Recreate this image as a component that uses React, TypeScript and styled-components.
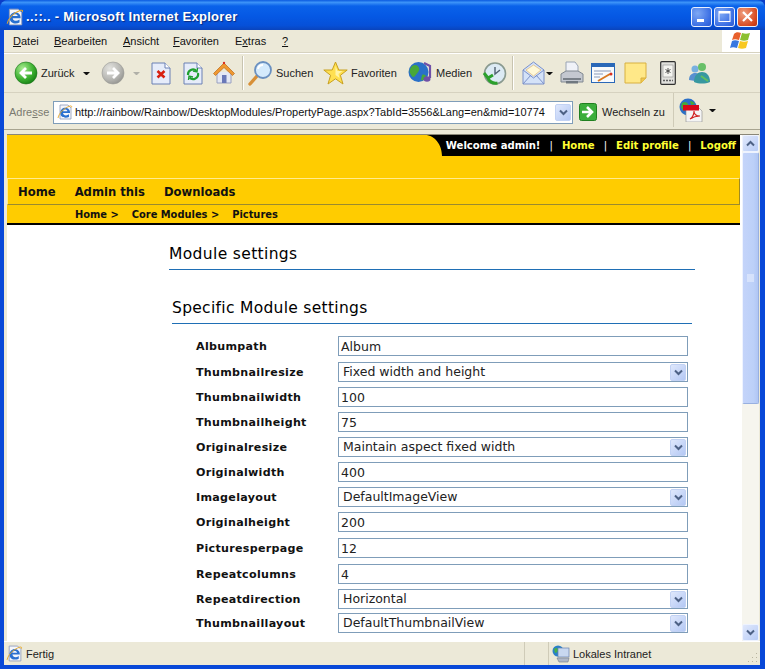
import React from "react";
import styled, { createGlobalStyle } from "styled-components";

const Global = createGlobalStyle`
  html, body { margin: 0; padding: 0; background: #0a3dc8; overflow: hidden; }
  * { box-sizing: border-box; }
`;
const ui = `"Liberation Sans", "Noto Sans", sans-serif`;
const page = `"DejaVu Sans", sans-serif`;

const Win = styled.div`
  width: 765px; height: 669px; display: flex; flex-direction: column;
  background: #0848d8; border-radius: 8px 8px 0 0; overflow: hidden;
`;
const TitleBar = styled.div`
  height: 30px; flex: none; display: flex; align-items: center; padding: 3px 7px 0 6px;
  background: linear-gradient(180deg, #0a5ae0 0%, #3c93f8 8%, #0a62ea 20%, #0558e4 55%, #0650d8 85%, #0a44bc 100%);
`;
const TitleText = styled.div`
  flex: 1; color: #fff; font: bold 13px "Liberation Sans", sans-serif; letter-spacing: .3px;
  text-shadow: 1px 1px 1px #0a2a80; white-space: pre; padding-left: 2px;
`;
const WinBtn = styled.div<{ $red?: boolean }>`
  width: 21px; height: 20px; margin-left: 2px; border: 1px solid #e8f0ff; border-radius: 3px; display: flex; align-items: center; justify-content: center;
  background: ${p => p.$red ? "radial-gradient(circle at 30% 30%, #f0a080, #d84a20 70%, #b83010)" : "radial-gradient(circle at 30% 30%, #7ea8f4, #3a6ee4 70%, #2a58d0)"};
`;
const Frame = styled.div`
  flex: 1; min-height: 0; margin: 0 5px 4px 4px; background: #ece9d8; display: flex; flex-direction: column;
`;
const MenuRow = styled.div`
  height: 23px; flex: none; display: flex; border-bottom: 1px solid #d6d2c0; font: 11px ${ui}; color: #111;
`;
const MenuItems = styled.div`
  flex: 1; display: flex; align-items: center; padding-left: 9px;
`;
const MenuLabel = styled.span<{ $w: number }>`
  width: ${p => p.$w}px; flex: none;
  u { text-underline-offset: 1px; }
`;
const FlagBox = styled.div`
  width: 38px; background: #fff; display: flex; align-items: center; justify-content: center;
`;
const ToolRow = styled.div`
  height: 40px; flex: none; display: flex; align-items: center; padding-left: 10px; border-bottom: 1px solid #d6d2c0; border-top: 1px solid #fff;
  font: 11px ${ui}; color: #222;
`;
const Tool = styled.div<{ $w: number }>`
  width: ${p => p.$w}px; flex: none; display: flex; align-items: center; gap: 3px; white-space: nowrap;
`;
const Sep = styled.div`
  height: 34px; background: #c8c4b0; border-right: 1px solid #fff; flex: none; width: 2px;
`;
const Caret = styled.div<{ $grey?: boolean; $ml?: number }>`
  height: 0; border: 3px solid transparent; border-top: 3px solid ${p => p.$grey ? "#b0b0a8" : "#111"}; border-bottom: 0; margin-left: ${p => p.$ml ?? 0}px; flex: none; width: 7px;
  border-left-width: 3.5px; border-right-width: 3.5px;
`;
const AddrRow = styled.div`
  height: 37px; flex: none; display: flex; align-items: center; padding: 2px 0 0 5px; font: 11px ${ui}; color: #222;
  border-bottom: 1px solid #a8a490;
`;
const AddrLabel = styled.span`
  color: #7a7a70; width: 44px; flex: none;
`;
const AddrBox = styled.div`
  width: 520px; height: 23px; flex: none; background: #fff; border: 1px solid #7f9db9; display: flex; align-items: center; padding: 0 1px 0 3px; gap: 2px; color: #111;
`;
const AddrUrl = styled.span`
  flex: 1; white-space: nowrap; overflow: hidden;
`;
const DropBtn = styled.div`
  width: 16px; height: 17px; flex: none; border: 1px solid #c2d2f4; border-radius: 2px; background: linear-gradient(135deg, #dfe8fc, #b4c8f4); display: flex; align-items: center; justify-content: center;
`;
const GoWrap = styled.div`
  display: flex; align-items: center; gap: 5px; margin-left: 6px; width: 94px; flex: none; color: #222; white-space: nowrap;
`;
const PdfWrap = styled.div`
  display: flex; align-items: center; gap: 6px; height: 100%; border-left: 1px solid #cfcbb8; padding-left: 5px; margin-top: -4px;
`;
const ViewPort = styled.div`
  flex: 1; min-height: 0; display: flex; margin: 4px 1px 0 3px; background: #fff; border-top: 1px solid #8a8778;
`;
const PageBox = styled.div`
  flex: 1; min-width: 0; overflow: hidden; background: #fff; margin-right: 2px;
`;
const TopBand = styled.div`
  height: 43px; background: #ffcc00; display: flex; justify-content: flex-end; align-items: flex-start;
`;
const UserBar = styled.div`
  width: 315px; height: 21px; background: #000; display: flex; align-items: center; justify-content: flex-end; gap: 9px; padding: 0 4px 0 0;
  font: bold 10.1px ${page}; color: #fff; white-space: nowrap; clip-path: path("M0 0 C10 0 17 10 17 21 L315 21 L315 0 Z");
`;
const UserLink = styled.span`color: #ffff33;`;
const Divider = styled.span`font-weight: normal; color: #fff;`;
const NavBar = styled.div`
  height: 27px; background: #ffcc00; border-top: 1px solid #ffeb90; border-bottom: 1px solid #9a8a30; border-left: 1px solid #ffeb90; border-right: 1px solid #a08a20;
  display: flex; align-items: center; gap: 19px; padding-left: 10px; font: bold 11.6px ${page}; color: #111;
`;
const Crumbs = styled.div`
  height: 20px; background: #ffcc00; border-bottom: 2px solid #000; display: flex; align-items: center; padding-left: 68px; font: bold 9.9px ${page}; color: #111; white-space: pre;
`;
const CrumbGap = styled.span<{ $w: number }>`margin-right: ${p => p.$w}px;`;
const Main = styled.div`
  padding: 20px 45px 0 162px;
`;
const H1 = styled.h1`
  margin: 0; font: normal 15.5px/18px ${page}; letter-spacing: .36px; color: #000; border-bottom: 1px solid #1f6fb5; height: 25px;
`;
const Section = styled.div`
  margin: 29px 3px 0 3px;
`;
const H2 = styled.h2`
  margin: 0; font: normal 15.5px/18px ${page}; letter-spacing: .3px; color: #000; height: 25px; border-bottom: 1px solid #1f6fb5;
`;
const Rows = styled.div`
  margin-top: 12px; padding-left: 24px;
`;
const Row = styled.div<{ $h: number }>`
  height: ${p => p.$h}px; display: flex; align-items: flex-start;
`;
const Label = styled.div`
  width: 142px; flex: none; font: bold 11.1px/21px ${page}; color: #111; letter-spacing: .3px;
`;
const TextField = styled.input`
  width: 350px; height: 20px; border: 1px solid #7f9db9; background: #fff; padding: 0 2px; font: 12.5px ${page}; color: #222; outline: none; display: block;
`;
const SelectField = styled.div`
  width: 350px; height: 20px; border: 1px solid #7f9db9; background: #fff; padding: 0 1px 0 4px; font: 12.5px/18px ${page}; color: #222; display: flex; align-items: center; justify-content: space-between;
`;
const Scroll = styled.div`
  width: 17px; flex: none; background: #f6f5ee; display: flex; flex-direction: column;
`;
const ScrollBtn = styled.div`
  height: 17px; flex: none; border: 1px solid #eef3ff; border-radius: 2px; background: linear-gradient(135deg, #e0e8fc, #b8ccf6); display: flex; align-items: center; justify-content: center;
`;
const Thumb = styled.div`
  height: 252px; flex: none; border: 1px solid #eef3ff; border-radius: 2px; border-right-color: #98b0e0; border-bottom-color: #98b0e0; background: linear-gradient(90deg, #c4d4fa, #bcd0f8 70%, #b0c6f4);
  display: flex; align-items: center; justify-content: center;
`;
const Track = styled.div`flex: 1;`;
const Status = styled.div`
  height: 24px; flex: none; display: flex; align-items: center; font: 11px ${ui}; color: #222; border-top: 1px solid #fff; background: #ece9d8;
`;
const StatusMain = styled.div`
  width: 520px; display: flex; align-items: center; gap: 3px; padding-left: 2px; flex: none; height: 100%;
`;
const Pane = styled.div<{ $w: number }>`
  width: ${p => p.$w}px; height: 100%; border-left: 1px solid #cfcbb8; flex: none; display: flex; align-items: center; gap: 3px; padding-left: 3px;
`;
const Grip = styled.div`
  flex: 1; display: flex; justify-content: flex-end; align-items: flex-end; height: 100%; padding: 0 2px 2px 0;
`;

const Chevron = ({ c = "#4d6185" }: { c?: string }) => (
  <svg width="9" height="7" viewBox="0 0 9 7"><path d="M1 1.5 L4.5 5 L8 1.5" fill="none" stroke={c} strokeWidth="2" /></svg>
);

const IeIcon = ({ s = 16 }: { s?: number }) => (
  <svg width={s} height={s} viewBox="0 0 16 16">
    <path d="M3 1h8l3 3v11H3z" fill="#f4f6fc" stroke="#8e9ab8" strokeWidth=".8" />
    <path d="M13 9H6c.3 2.6 3.6 3.2 6 1.3v2.6c-3.6 1.8-8.5.6-8.7-3.6C3 4.6 8 2.5 11 4.6c1.6 1.1 2.1 2.6 2 4.4zM10.4 7.2C10.2 5 6.4 5 6 7.2z" fill="#2a70d0" />
    <path d="M1 14c1-5 6-10 12-12 1.500-.3 2 .3 1.500 1.500" fill="none" stroke="#e8a828" strokeWidth=".9" />
  </svg>
);

const RoundArrow = ({ grey }: { grey?: boolean }) => (
  <svg width="24" height="24" viewBox="0 0 24 24">
    <defs>
      <radialGradient id={grey ? "gg" : "gr"} cx=".35" cy=".3" r=".8">
        <stop offset="0" stopColor={grey ? "#e4e4e0" : "#a8ec90"} />
        <stop offset=".6" stopColor={grey ? "#b8b8b4" : "#3cb030"} />
        <stop offset="1" stopColor={grey ? "#8e8e8a" : "#107810"} />
      </radialGradient>
    </defs>
    <circle cx="12" cy="12" r="11" fill={`url(#${grey ? "gg" : "gr"})`} stroke={grey ? "#9a9a96" : "#187018"} strokeWidth=".6" />
    {grey
      ? <path d="M6 12h10M12 7l5 5-5 5" fill="none" stroke="#fff" strokeWidth="2.8" />
      : <path d="M18 12H8M12 7l-5 5 5 5" fill="none" stroke="#fff" strokeWidth="2.8" />}
  </svg>
);

const PageIcon = ({ kind }: { kind: "stop" | "ref" }) => (
  <svg width="20" height="23" viewBox="0 0 20 23">
    <path d="M1 1h13l5 5v16H1z" fill="#e6ecfa" stroke="#6a80b4" />
    <path d="M14 1v5h5" fill="#fff" stroke="#6a80b4" />
    {kind === "stop"
      ? <path d="M6.500 9l7 6.500M13.500 9l-7 6.500" stroke="#d82010" strokeWidth="2.600" />
      : <g fill="none" stroke="#20a030" strokeWidth="2.200"><path d="M5 13a5 5 0 0 1 8.500-4" /><path d="M15 11a5 5 0 0 1-8.500 4.500" /><path d="M14.500 6l-.5 4-4-1" strokeWidth="1.400" /><path d="M5.500 18l.5-4 4 1" strokeWidth="1.400" /></g>}
  </svg>
);

const Home = () => (
  <svg width="24" height="24" viewBox="0 0 24 24">
    <path d="M5 11v11h14V11" fill="#e4e8f4" stroke="#98a0c0" />
    <path d="M12 2L1.500 12.500l2 2L12 6.500l8.500 8 2-2z" fill="#f09830" stroke="#b86818" strokeWidth=".7" />
    <rect x="10" y="14" width="4.500" height="8" fill="#6a78b8" />
    <circle cx="12" cy="2" r="1.200" fill="#d83020" />
  </svg>
);

const Magnifier = () => (
  <svg width="25" height="27" viewBox="0 0 25 27">
    <path d="M9 16L2 24" stroke="#d89038" strokeWidth="3.400" strokeLinecap="round" />
    <circle cx="15" cy="10" r="8" fill="#d4eafc" stroke="#6a90c0" strokeWidth="1.800" />
    <path d="M10 9a5 5 0 0 1 5-4" stroke="#fff" strokeWidth="2" fill="none" />
  </svg>
);

const Star = () => (
  <svg width="25" height="25" viewBox="0 0 25 25">
    <path d="M12.500 1l3.300 8h8.400l-6.800 5.300 2.600 8.700-7.500-5.200L5 23l2.600-8.700L.8 9h8.400z" fill="#ffe050" stroke="#c8a020" strokeWidth="1" />
    <path d="M12.500 5l2 5h5l-4 3 1 4-4-3z" fill="#fff4a8" />
  </svg>
);

const Media = () => (
  <svg width="25" height="24" viewBox="0 0 25 24">
    <circle cx="10.500" cy="11" r="10" fill="#2a70c8" />
    <path d="M4 5c3-2 6-1 7 2s-2 5-4 8-4-1-5-3 0-5 2-7zM14 14c2-1 4 0 4 2s-3 4-5 3z" fill="#48a838" />
    <path d="M16 2l6 3v12" fill="none" stroke="#7050a8" strokeWidth="2.200" />
    <ellipse cx="19" cy="18" rx="3.500" ry="2.800" fill="#7050a8" />
  </svg>
);

const History = () => (
  <svg width="25" height="25" viewBox="0 0 25 25">
    <circle cx="13" cy="12.500" r="10.500" fill="#dceaf4" stroke="#8a9a90" strokeWidth="1.600" />
    <path d="M13 6v7l5 -4" fill="none" stroke="#506070" strokeWidth="1.400" />
    <path d="M2 12l4 5 5-3M5.500 16c1 4 5 7 10 6" fill="none" stroke="#2ca02c" strokeWidth="3" />
  </svg>
);

const Mail = () => (
  <svg width="23" height="24" viewBox="0 0 23 24">
    <path d="M1 9L11.500 1 22 9v14H1z" fill="#d4e2f8" stroke="#7a90c8" />
    <path d="M4 9l7.500-5L19 9l-7.500 6z" fill="#fff8d8" stroke="#e0b060" strokeWidth=".6" />
    <path d="M1 23l8-9M22 23l-8-9M1 9l10.500 8L22 9" fill="none" stroke="#7a90c8" />
  </svg>
);

const Printer = () => (
  <svg width="24" height="24" viewBox="0 0 24 24">
    <path d="M6 1h9l3 4v8H6z" fill="#f0f2f8" stroke="#9aa4b4" />
    <path d="M1 13l5-3h12l5 3v8H1z" fill="#c4c8d0" stroke="#808890" />
    <path d="M3 18h18" stroke="#606870" strokeWidth="1.600" />
    <rect x="6" y="20" width="12" height="2.500" fill="#707880" />
  </svg>
);

const EditIcon = () => (
  <svg width="24" height="20" viewBox="0 0 24 20">
    <rect x=".5" y=".5" width="23" height="19" fill="#f8fafc" stroke="#2a68b8" />
    <rect x=".5" y=".5" width="23" height="3.500" fill="#2a68b8" />
    <path d="M3 8h17M3 11h9M3 14h6" stroke="#8a9ab8" />
    <path d="M7 18l12-7" stroke="#d87820" strokeWidth="2" />
    <circle cx="20" cy="11" r="1.500" fill="#d83020" />
  </svg>
);

const Note = () => (
  <svg width="23" height="22" viewBox="0 0 23 22">
    <path d="M1 1h21v15l-5 5H1z" fill="#ffe888" stroke="#d8b040" />
    <path d="M17 21v-5h5" fill="#f0c850" stroke="#d8b040" />
  </svg>
);

const Pda = () => (
  <svg width="16" height="24" viewBox="0 0 16 24">
    <rect x=".7" y=".7" width="14.600" height="22.600" rx="1" fill="#e0e0dc" stroke="#303030" strokeWidth="1.200" />
    <rect x="3" y="4" width="10" height="12" fill="#f4f4f0" stroke="#909090" strokeWidth=".6" />
    <path d="M8 7v6M5.500 8.500l5 3M10.500 8.500l-5 3" stroke="#404040" strokeWidth=".9" />
    <path d="M3 19.500h10" stroke="#606060" strokeWidth="1.600" strokeDasharray="2 1" />
  </svg>
);

const Messenger = () => (
  <svg width="26" height="22" viewBox="0 0 26 22">
    <circle cx="8" cy="7" r="3.500" fill="#78b0e0" />
    <path d="M2 18c0-5 3-7 6-7s5 2 5 5l-5 3z" fill="#5890d0" />
    <circle cx="15" cy="5" r="4" fill="#68c068" />
    <path d="M7 20c0-7 4-10 8-10s8 3 8 10c-5 2-11 2-16 0z" fill="#3898a0" />
    <path d="M14 14l7 5" stroke="#60c060" strokeWidth="2" />
  </svg>
);

const GoArrow = () => (
  <svg width="18" height="18" viewBox="0 0 18 18">
    <rect x=".5" y=".5" width="17" height="17" rx="2" fill="#3cae3c" stroke="#208020" />
    <path d="M3 9h9M8 4l5 5-5 5" fill="none" stroke="#fff" strokeWidth="2.600" />
  </svg>
);

const PdfGlobe = () => (
  <svg width="24" height="24" viewBox="0 0 24 24">
    <circle cx="9" cy="9" r="8.500" fill="#2a70c8" />
    <path d="M3 5c3-2 5-1 6 1s-2 4-3 6-3-1-4-3zM11 3c2 0 4 1 5 3l-4 1z" fill="#48a838" />
    <path d="M7 8h11l5 5v11H7z" fill="#f4f4f4" stroke="#8a8a8a" strokeWidth=".6" />
    <rect x="4" y="7" width="16" height="5.500" fill="#d80818" />
    <path d="M11 21c3-2 4-5 4-8 0 3 2 5 6 5-3 0-7 1-10 3z" fill="none" stroke="#d02020" strokeWidth="1.100" />
  </svg>
);

const Flag = () => (
  <svg width="22" height="20" viewBox="0 0 22 20">
    <path d="M4 3c2-2 4-2 7-1L9 9C6 8 4 8 2 9z" fill="#e8602c" />
    <path d="M12 2c3 1 5 1 8 0l-2 7c-3 1-5 1-8 0z" fill="#8cc030" />
    <path d="M2 10c2-1 4-1 7 0l-2 7c-3-1-5-1-7 0z" fill="#3878e0" />
    <path d="M10 10c3 1 5 1 8 0l-2 7c-3 1-5 1-8 0z" fill="#f8c820" />
  </svg>
);

const NetIcon = () => (
  <svg width="18" height="18" viewBox="0 0 18 18">
    <circle cx="6" cy="6" r="5.500" fill="#2a80c8" />
    <path d="M2 4c2-2 4-1 4 1s-2 3-3 3zM7 7c2 0 3 1 2 3z" fill="#48b048" />
    <rect x="6" y="3" width="11" height="9" fill="#c8d8f0" stroke="#6880b0" strokeWidth=".7" />
    <path d="M5 13h12l-1 4H7z" fill="#b0b8c8" stroke="#707888" strokeWidth=".6" />
  </svg>
);

const WMin = () => <svg width="13" height="13" viewBox="0 0 13 13"><rect x="2" y="9" width="7" height="3" fill="#fff" /></svg>;
const WMax = () => <svg width="13" height="13" viewBox="0 0 13 13"><rect x="1" y="1.500" width="11" height="10" fill="none" stroke="#fff" /><rect x="1" y="1" width="11" height="2.500" fill="#fff" /></svg>;
const WClose = () => <svg width="13" height="13" viewBox="0 0 13 13"><path d="M2 2l9 9M11 2l-9 9" stroke="#fff" strokeWidth="2.200" /></svg>;

type F = { label: string; value: string; select?: boolean; h: number };
const fields: F[] = [
  { label: "Albumpath", value: "Album", h: 26 },
  { label: "Thumbnailresize", value: "Fixed width and height", select: true, h: 25 },
  { label: "Thumbnailwidth", value: "100", h: 25 },
  { label: "Thumbnailheight", value: "75", h: 25 },
  { label: "Originalresize", value: "Maintain aspect fixed width", select: true, h: 25 },
  { label: "Originalwidth", value: "400", h: 25 },
  { label: "Imagelayout", value: "DefaultImageView", select: true, h: 25 },
  { label: "Originalheight", value: "200", h: 26 },
  { label: "Picturesperpage", value: "12", h: 26 },
  { label: "Repeatcolumns", value: "4", h: 25 },
  { label: "Repeatdirection", value: "Horizontal", select: true, h: 24 },
  { label: "Thumbnaillayout", value: "DefaultThumbnailView", select: true, h: 25 },
];

export default function App() {
  return (
    <Win>
      <Global />
      <TitleBar>
        <IeIcon s={18} />
        <TitleText>..::.. - Microsoft Internet Explorer</TitleText>
        <WinBtn><WMin /></WinBtn>
        <WinBtn><WMax /></WinBtn>
        <WinBtn $red><WClose /></WinBtn>
      </TitleBar>
      <Frame>
        <MenuRow>
          <MenuItems>
            <MenuLabel $w={41}><u>D</u>atei</MenuLabel>
            <MenuLabel $w={69}><u>B</u>earbeiten</MenuLabel>
            <MenuLabel $w={50}><u>A</u>nsicht</MenuLabel>
            <MenuLabel $w={62}><u>F</u>avoriten</MenuLabel>
            <MenuLabel $w={47}>E<u>x</u>tras</MenuLabel>
            <MenuLabel $w={12}><u>?</u></MenuLabel>
          </MenuItems>
          <FlagBox><Flag /></FlagBox>
        </MenuRow>
        <ToolRow>
          <Tool $w={67}><RoundArrow />Zurück</Tool>
          <Tool $w={20}><Caret $ml={2} /></Tool>
          <Tool $w={32}><RoundArrow grey /></Tool>
          <Tool $w={18}><Caret $grey /></Tool>
          <Tool $w={32}><PageIcon kind="stop" /></Tool>
          <Tool $w={29}><PageIcon kind="ref" /></Tool>
          <Tool $w={30}><Home /></Tool>
          <Tool $w={6}><Sep /></Tool>
          <Tool $w={75}><Magnifier />Suchen</Tool>
          <Tool $w={85}><Star />Favoriten</Tool>
          <Tool $w={74}><Media />Medien</Tool>
          <Tool $w={30}><History /></Tool>
          <Tool $w={10}><Sep /></Tool>
          <Tool $w={24}><Mail /></Tool>
          <Tool $w={14}><Caret /></Tool>
          <Tool $w={31}><Printer /></Tool>
          <Tool $w={33}><EditIcon /></Tool>
          <Tool $w={36}><Note /></Tool>
          <Tool $w={27}><Pda /></Tool>
          <Tool $w={28}><Messenger /></Tool>
        </ToolRow>
        <AddrRow>
          <AddrLabel>Adre<u>s</u>se</AddrLabel>
          <AddrBox>
            <IeIcon s={16} />
            <AddrUrl>http://rainbow/Rainbow/DesktopModules/PropertyPage.aspx?TabId=3556&amp;Lang=en&amp;mid=10774</AddrUrl>
            <DropBtn><Chevron /></DropBtn>
          </AddrBox>
          <GoWrap><GoArrow />Wechseln zu</GoWrap>
          <PdfWrap><PdfGlobe /><Caret /></PdfWrap>
        </AddrRow>
        <ViewPort>
          <PageBox>
            <TopBand>
              <UserBar>
                <span>Welcome admin!</span><Divider>|</Divider>
                <UserLink>Home</UserLink><Divider>|</Divider>
                <UserLink>Edit profile</UserLink><Divider>|</Divider>
                <UserLink>Logoff</UserLink>
              </UserBar>
            </TopBand>
            <NavBar><span>Home</span><span>Admin this</span><span>Downloads</span></NavBar>
            <Crumbs><CrumbGap $w={13}>Home &gt;</CrumbGap><CrumbGap $w={13}>Core Modules &gt;</CrumbGap><span>Pictures</span></Crumbs>
            <Main>
              <H1>Module settings</H1>
              <Section>
                <H2>Specific Module settings</H2>
                <Rows>
                  {fields.map(f => (
                    <Row key={f.label} $h={f.h}>
                      <Label>{f.label}</Label>
                      {f.select
                        ? <SelectField>{f.value}<DropBtn><Chevron /></DropBtn></SelectField>
                        : <TextField readOnly value={f.value} />}
                    </Row>
                  ))}
                </Rows>
              </Section>
            </Main>
          </PageBox>
          <Scroll>
            <ScrollBtn><svg width="9" height="7" viewBox="0 0 9 7"><path d="M1 5.500L4.500 2 8 5.500" fill="none" stroke="#4d6185" strokeWidth="2" /></svg></ScrollBtn>
            <Thumb><svg width="7" height="8" viewBox="0 0 7 8"><path d="M0 1h7M0 3h7M0 5h7M0 7h7" stroke="#eef3ff" /></svg></Thumb>
            <Track />
            <ScrollBtn><Chevron /></ScrollBtn>
          </Scroll>
        </ViewPort>
        <Status>
          <StatusMain><IeIcon s={17} />Fertig</StatusMain>
          <Pane $w={24} />
          <Pane $w={164}><NetIcon />Lokales Intranet</Pane>
          <Grip><svg width="11" height="11" viewBox="0 0 11 11"><path d="M9 1h1v1H9zM5 5h1v1H5zM9 5h1v1H9zM1 9h1v1H1zM5 9h1v1H5zM9 9h1v1H9z" fill="#b8b4a0" /></svg></Grip>
        </Status>
      </Frame>
    </Win>
  );
}
